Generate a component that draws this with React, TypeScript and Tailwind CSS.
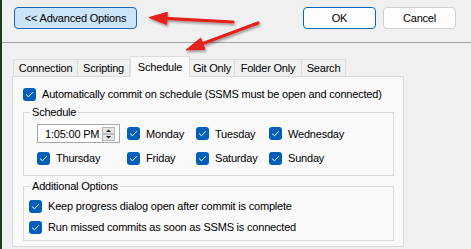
import React from "react";

function Check() {
  return (
    <span className="w-[13px] h-[13px] rounded-[3px] bg-[#005fb8] flex items-center justify-center shrink-0">
      <svg width="13" height="13" viewBox="0 0 13 13">
        <path d="M3.4 6.9 L5.5 8.8 L9.6 4.5" fill="none" stroke="#ffffff" strokeWidth="1" strokeLinecap="round" strokeLinejoin="round" />
      </svg>
    </span>
  );
}

function CheckItem({ label }: { label: string }) {
  return (
    <div className="flex items-center h-[16px] gap-[6px]">
      <Check />
      <span className="whitespace-nowrap">{label}</span>
    </div>
  );
}

function Spinner() {
  return (
    <svg width="13" height="14" viewBox="0 0 13 14" className="shrink-0">
      <rect x="0.5" y="0.5" width="12" height="13" fill="#e5e5e5" stroke="#b5b5b5" />
      <line x1="1" y1="7" x2="12" y2="7" stroke="#9a9a9a" />
      <path d="M4 5 L9 5 L6.5 2.5 Z" fill="#1a1a1a" />
      <path d="M4 9 L9 9 L6.5 11.5 Z" fill="#1a1a1a" />
    </svg>
  );
}

const tabs = [
  { name: "Connection", w: "w-[65px]" },
  { name: "Scripting", w: "w-[52px]" },
  { name: "Schedule", w: "w-[60px]", active: true },
  { name: "Git Only", w: "w-[45px]" },
  { name: "Folder Only", w: "w-[67px]" },
  { name: "Search", w: "w-[44px]" },
];

export default function App() {
  return (
    <div className="relative w-[471px] h-[249px] bg-[#f0f0f0] border-l-2 border-[#1c3a1c] overflow-hidden text-[11px] tracking-[-0.2px] leading-[16px] text-black font-['Liberation_Sans',Arial,sans-serif]">
      <div className="h-[42px] flex items-start pt-[7px] pl-[12px] pr-[15px]">
        <button className="w-[123px] h-[22px] rounded-[4px] border border-[#1a66b0] bg-[#cce4f7] flex items-center justify-center whitespace-nowrap">
          &lt;&lt; Advanced Options
        </button>
        <div className="flex-1" />
        <button className="w-[73px] h-[22px] rounded-[4px] border border-[#0067c0] bg-[#fdfdfd] flex items-center justify-center">
          OK
        </button>
        <button className="ml-[7px] w-[73px] h-[22px] rounded-[4px] border border-[#d0d0d0] bg-[#fdfdfd] flex items-center justify-center">
          Cancel
        </button>
      </div>
      <div className="h-px bg-[#a0a0a0]" />

      <div className="pl-[10px] pt-[13px]">
        <div className="flex items-end h-[20px] pl-px">
          {tabs.map((t) =>
            t.active ? (
              <div
                key={t.name}
                className={`${t.w} h-[21px] -mb-px relative z-10 border border-b-0 border-[#dcdcdc] bg-[#f9f9f9] flex items-center justify-center pb-[1px] whitespace-nowrap`}
              >
                {t.name}
              </div>
            ) : (
              <div
                key={t.name}
                className={`${t.w} h-[17px] border border-b-0 border-l-0 first:border-l border-[#dcdcdc] bg-[#f0f0f0] flex items-center justify-center whitespace-nowrap`}
              >
                {t.name}
              </div>
            )
          )}
        </div>

        <div className="w-[392px] h-[171px] border border-[#dcdcdc] bg-[#f9f9f9] pt-[9px]">
          <div className="ml-[10px]">
            <CheckItem label="Automatically commit on schedule (SSMS must be open and connected)" />
          </div>

          <fieldset className="ml-[10px] mt-[2px] w-[371px] border border-[#dadada]">
            <legend className="ml-[6px] px-[2px]">Schedule</legend>
            <div className="pt-[4px] pb-[9px] pl-[13px] grid grid-cols-[90px_69px_73px_auto] gap-y-[7px] items-center">
              <div className="w-[83px] h-[19px] border border-[#a8a8a8] bg-white flex items-center pl-[7px] pr-[4px] justify-between whitespace-nowrap">
                <span>1:05:00 PM</span>
                <Spinner />
              </div>
              <CheckItem label="Monday" />
              <CheckItem label="Tuesday" />
              <CheckItem label="Wednesday" />
              <CheckItem label="Thursday" />
              <CheckItem label="Friday" />
              <CheckItem label="Saturday" />
              <CheckItem label="Sunday" />
            </div>
          </fieldset>

          <fieldset className="ml-[10px] mt-[2px] w-[371px] border border-[#dadada]">
            <legend className="ml-[6px] px-[2px]">Additional Options</legend>
            <div className="pt-[4px] pb-[5px] pl-[5px] flex flex-col gap-[5px]">
              <CheckItem label="Keep progress dialog open after commit is complete" />
              <CheckItem label="Run missed commits as soon as SSMS is connected" />
            </div>
          </fieldset>
        </div>
      </div>

      <svg
        className="absolute top-0 -left-[2px] w-[471px] h-[249px] pointer-events-none"
        viewBox="0 0 471 249"
      >
        <defs>
          <filter id="sh" x="-20%" y="-50%" width="140%" height="200%">
            <feDropShadow dx="1" dy="2" stdDeviation="1.2" floodColor="#000" floodOpacity="0.35" />
          </filter>
        </defs>
        <g filter="url(#sh)" fill="#e3201b" stroke="#e3201b">
          <line x1="233" y1="22" x2="165" y2="18.4" strokeWidth="3.2" strokeLinecap="round" />
          <path d="M149 17.5 L167.3 12.3 L166.7 24.5 Z" strokeWidth="1" strokeLinejoin="round" />
          <line x1="258" y1="23" x2="201" y2="44.3" strokeWidth="3.2" strokeLinecap="round" />
          <path d="M186 50 L200.7 38.1 L204.9 49.3 Z" strokeWidth="1" strokeLinejoin="round" />
        </g>
      </svg>
    </div>
  );
}
